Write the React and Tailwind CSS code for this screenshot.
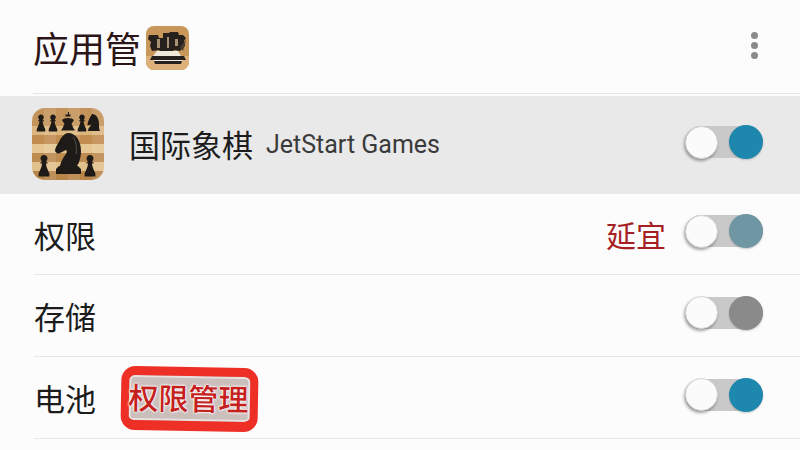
const cjk = { fontFamily: '"Noto Sans CJK SC", "Roboto", sans-serif' };

const Pawn = ({ x, y, s = 1 }) => (
  <path
    transform={`translate(${x} ${y}) scale(${s})`}
    d="M0-10a3 3 0 0 1 2 5.200l-.2.8H3v1H1.600C1.800 0 3.500 3 4.500 5.500V8h-9V5.500C-3.500 3-1.800 0-1.600-3H-3v-1h1.200l-.2-.8A3 3 0 0 1 0-10Z"
    fill="#1d1a17"
  />
);

function BoardIcon() {
  // wood stripes, the squares only show faintly through them
  const stripes = ["#c4935a", "#c4935a", "#dcb67f", "#c08c50", "#e6c794", "#bd8a50", "#e2c08c", "#b98448"];
  const cols = [0, 24, 48];
  return (
    <svg width="72" height="72" viewBox="0 0 72 72" className="shrink-0 rounded-[13px]">
      {stripes.map((c, i) => (
        <rect key={i} x="0" y={i * 9} width="72" height="9.200" fill={c} />
      ))}
      {cols.map((x) => (
        <rect key={x} x={x + 12} y="0" width="12" height="72" fill="#fff" opacity="0.1" />
      ))}
      {/* top row */}
      <Pawn x={9} y={16} s={0.95} />
      <Pawn x={21} y={16} s={0.95} />
      <path d="M36 4v2.500h-2.500v2H36v1.500c-2.500 0-5 .8-6 2l2.500 4-1 1.500c0 1.500-1 3-2.500 5h14c-1.500-2-2.500-3.500-2.500-5l-1-1.500 2.500-4c-1-1.200-3.500-2-6-2V8.500h2.500v-2H37V4Z" fill="#1d1a17" />
      <Pawn x={50} y={16} s={0.95} />
      <path d="M60 6c4 0 7 4 7 10 0 3 0 5 1 7H56c0-3 2-4 3.500-6.500-1.500.5-3 1-4 .5 0-3 2-7 4.500-11Z" fill="#1d1a17" />
      {/* knight */}
      <path
        d="M36 25c8 0 13 8 13 18 0 7-2 12-4 15h1l3 3v5H24v-5l3-3h1c1-5 3-8 6-12 1-2 1-3 0-4-2 1-4 2-6 3-2 1-4 0-5-2 0-3 2-6 4-9 2-5 6-9 9-9Z"
        fill="#1d1a17"
      />
      <path d="M41 29c3 4 4 10 3 17" fill="none" stroke="#57504a" strokeWidth="1" />
      {/* bottom pawns */}
      <Pawn x={12} y={59} s={1.200} />
      <Pawn x={58} y={59} s={1.200} />
    </svg>
  );
}

function CrownIcon() {
  return (
    <svg width="43" height="44" viewBox="0 0 43 44" className="shrink-0 rounded-[8px]">
      <rect width="43" height="44" fill="#c99759" />
      <rect y="30" width="43" height="14" fill="#dcb27a" />
      {/* blurred piece tops */}
      <path d="M3 9h9l1 3h4V7h6l1-1h8l1 3h4l3 3-2 3 1 5-5 5-6-1-2 3H16l-3-3-7 1-2-5 1-4-3-3Z" fill="#26211d" />
      <path d="M11 13h3v9h-3ZM21 11h2v11h-2ZM29 13h3v7h-3Z" fill="#a89272" />
      {/* base bands */}
      <path d="M11 25h21l3 5H7Z" fill="#efe9dc" />
      <path d="M6 30h32l2 4H4Z" fill="#26211d" />
      <path d="M8 34h28l1 1H7Z" fill="#efe9dc" />
      <path d="M8 35h28l-1 3H9Z" fill="#26211d" />
      <path d="M34 21l6-7-3 11Z" fill="#4a3f34" />
    </svg>
  );
}

function Toggle({ knob, className = "" }) {
  return (
    <div className={`flex h-[32px] w-[78px] items-center justify-between rounded-full bg-[#c9c9c9] ${className}`}>
      <span className="h-[33px] w-[33px] rounded-full border border-[#d4d4d4] bg-[#fbfbfb] shadow-[-1px_2px_3px_rgba(0,0,0,0.35)]" />
      <span className={`h-[34px] w-[34px] rounded-full shadow-[0_1px_2px_rgba(0,0,0,0.2)] ${knob}`} />
    </div>
  );
}

function Row({ children, knob, height }) {
  return (
    <div className={`flex items-center justify-between border-b border-[#e8e6e3] pr-[37px] ${height}`}>
      {children}
      <Toggle knob={knob} className="-mt-[6px]" />
    </div>
  );
}

export default function App() {
  return (
    <div className="h-[450px] w-[800px] overflow-hidden bg-[#fcfcfc]" style={cjk}>
      {/* header */}
      <div className="flex h-[93px] items-center justify-between pl-[33px] pr-[42px] pt-[3px]">
        <div className="flex items-center gap-[5px]">
          <span className="-mt-[2px] text-[36px] leading-none text-[#2c1518]">应用管</span>
          <CrownIcon />
        </div>
        <div className="-mt-[5px] flex flex-col gap-[3px]">
          <span className="h-[7px] w-[7px] rounded-full bg-[#8a8a8a]" />
          <span className="h-[7px] w-[7px] rounded-full bg-[#8a8a8a]" />
          <span className="h-[7px] w-[7px] rounded-full bg-[#8a8a8a]" />
        </div>
      </div>
      <div className="ml-[33px] h-[3px] border-t border-[#e9e7e3]" />

      {/* selected app row */}
      <div className="flex h-[98px] items-center justify-between bg-[#e9e9e9] pb-[2px] pl-[32px] pr-[37px]">
        <div className="flex items-center">
          <BoardIcon />
          <span className="-mt-[2px] ml-[25px] text-[31px] leading-none text-[#1c1c1c]">国际象棋</span>
          <span className="ml-[13px] text-[25px] leading-none text-[#3a3a3a]" style={{ fontFamily: "Roboto, sans-serif" }}>
            JetStart Games
          </span>
        </div>
        <Toggle knob="bg-[#1d87ae]" className="-mt-[4px]" />
      </div>

      {/* settings rows */}
      <div className="pl-[34px]">
        <Row knob="bg-[#6f97a3]" height="h-[81px]">
          <span className="text-[31px] leading-none text-[#1c1c1c]">权限</span>
          <span className="-mt-[1px] ml-auto mr-[19px] text-[30px] leading-none text-[#a51f24]">延宜</span>
        </Row>
        <Row knob="bg-[#8a8a8a]" height="h-[82px]">
          <span className="text-[31px] leading-none text-[#1c1c1c]">存储</span>
        </Row>
        <Row knob="bg-[#1d87ae]" height="h-[82px]">
          <div className="flex items-center">
            <span className="text-[31px] leading-none text-[#1c1c1c]">电池</span>
            <span className="mt-[3px] ml-[25px] flex h-[64px] w-[137px] rotate-[1deg] items-center justify-center rounded-[14px] border-[8px] border-t-[9px] border-b-[10px] border-[#ee2f26] bg-[#cbbfbc] pr-[2px] pb-[4px] text-[30px] leading-none font-medium whitespace-nowrap text-[#c5201c] shadow-[inset_0_0_0_2px_rgba(255,255,255,0.55)] [text-shadow:0_0_2px_#fff,0_0_2px_#fff,0_0_3px_#fff]">
              权限管理
            </span>
          </div>
        </Row>
      </div>
    </div>
  );
}
